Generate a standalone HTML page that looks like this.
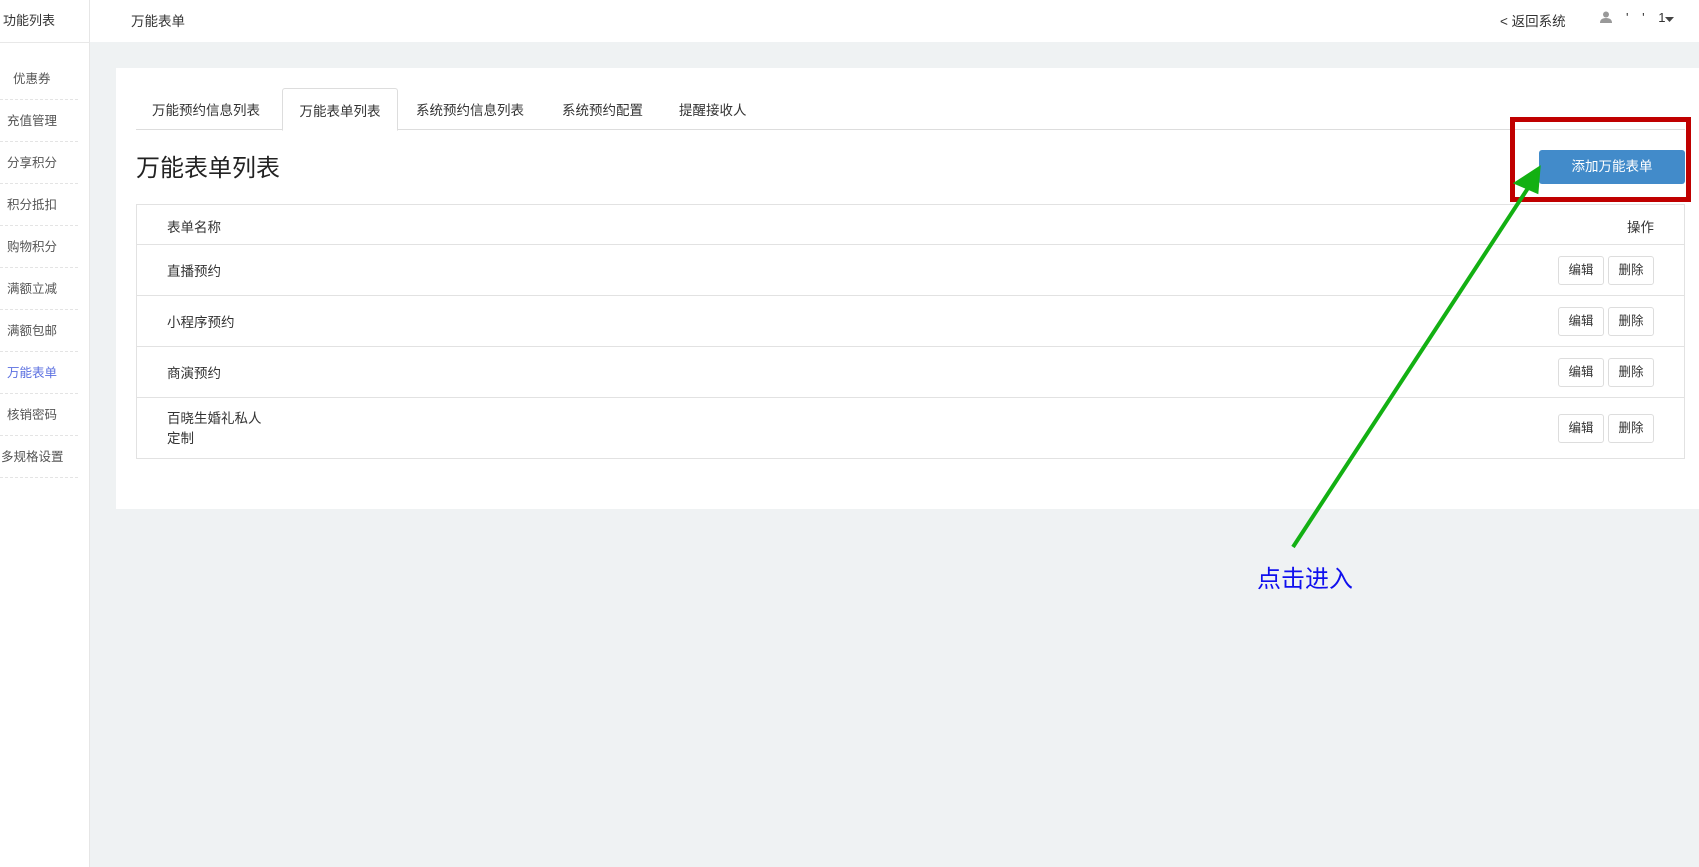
<!DOCTYPE html>
<html><head><meta charset="utf-8"><style>
*{margin:0;padding:0;box-sizing:border-box}
body{width:1699px;height:867px;background:#eff2f3;font-family:"Liberation Sans","Noto Sans CJK SC",sans-serif;color:#333;position:relative;overflow:hidden;font-size:13px}
.abs{position:absolute}
#side{left:0;top:0;width:90px;height:867px;background:#fff;border-right:1px solid #e6e6e6}
#hdr{left:90px;top:0;width:1609px;height:42px;background:#fff}
.si{position:absolute;left:0;width:78px;height:42px;line-height:42px;font-size:12.5px;color:#555;border-bottom:1px dashed #e4e4e4;padding-left:7px}
#panel{left:116px;top:68px;width:1583px;height:441px;background:#fff}
.tab{position:absolute;top:88px;height:42px;line-height:45px;font-size:13.5px;color:#333}
.row{position:absolute;left:136px;width:1549px;border-left:1px solid #e2e2e2;border-right:1px solid #e2e2e2;border-bottom:1px solid #e2e2e2;font-size:13.5px}
.row span.t{position:absolute;left:30px}
.b{position:absolute;width:46px;height:29px;border:1px solid #ddd;border-radius:3px;background:#fff;font-size:12.5px;text-align:center;line-height:27px;color:#333}
</style></head><body>
<div id="side" class="abs">
<div class="abs" style="left:3px;top:10px;font-size:13px;color:#333">功能列表</div>
<div class="abs" style="left:0;top:42px;width:90px;border-top:1px solid #e8e8e8"></div>
<div class="si" style="top:58px;padding-left:13px">优惠券</div>
<div class="si" style="top:100px">充值管理</div>
<div class="si" style="top:142px">分享积分</div>
<div class="si" style="top:184px">积分抵扣</div>
<div class="si" style="top:226px">购物积分</div>
<div class="si" style="top:268px">满额立减</div>
<div class="si" style="top:310px">满额包邮</div>
<div class="si" style="top:352px;color:#5b6fe0">万能表单</div>
<div class="si" style="top:394px">核销密码</div>
<div class="si" style="top:436px;padding-left:1px">多规格设置</div>
</div>
<div id="hdr" class="abs">
<div class="abs" style="left:41px;top:10px;font-size:13.5px">万能表单</div>
<div class="abs" style="left:1410px;top:10px;font-size:13.5px">&lt; 返回系统</div>
<svg class="abs" style="left:1510px;top:11px" width="12" height="12" viewBox="0 0 12 12"><circle cx="6" cy="3.5" r="3" fill="#999"/><path d="M0 12 Q0 7 6 7 Q12 7 12 12Z" fill="#999"/></svg>
<div class="abs" style="left:1536px;top:10px;font-size:13px;letter-spacing:5px">' ' 1</div>
<svg class="abs" style="left:1575px;top:17px" width="9" height="5"><path d="M0 0H9L4.5 5Z" fill="#444"/></svg>
</div>
<div id="panel" class="abs"></div>
<div class="abs" style="left:136px;top:129px;width:1549px;border-top:1px solid #ddd"></div>
<div class="tab" style="left:152px">万能预约信息列表</div>
<div class="tab" style="left:282px;width:116px;border:1px solid #ddd;border-bottom:1px solid #fff;background:#fff;border-radius:3px 3px 0 0;text-align:center;height:43px">万能表单列表</div>
<div class="tab" style="left:416px">系统预约信息列表</div>
<div class="tab" style="left:562px">系统预约配置</div>
<div class="tab" style="left:679px">提醒接收人</div>
<div class="abs" style="left:136px;top:148px;font-size:24px;color:#222">万能表单列表</div>
<div class="abs" style="left:1539px;top:150px;width:146px;height:34px;background:#428bca;border-radius:3px;color:#fff;font-size:13.5px;text-align:center;line-height:34px">添加万能表单</div>
<div class="abs" style="left:1510px;top:117px;width:181px;height:85px;border:5px solid #c00000"></div>
<div class="row" style="top:204px;height:41px;border-top:1px solid #e2e2e2"><span class="t" style="top:11px">表单名称</span><span style="position:absolute;right:30px;top:11px">操作</span></div>
<div class="row" style="top:245px;height:51px"><span class="t" style="top:15px">直播预约</span></div>
<div class="row" style="top:296px;height:51px"><span class="t" style="top:15px">小程序预约</span></div>
<div class="row" style="top:347px;height:51px"><span class="t" style="top:15px">商演预约</span></div>
<div class="row" style="top:398px;height:61px"><span class="t" style="top:11px;line-height:20px">百晓生婚礼私人<br>定制</span></div>
<div class="b" style="left:1558px;top:256px">编辑</div><div class="b" style="left:1608px;top:256px">删除</div>
<div class="b" style="left:1558px;top:307px">编辑</div><div class="b" style="left:1608px;top:307px">删除</div>
<div class="b" style="left:1558px;top:358px">编辑</div><div class="b" style="left:1608px;top:358px">删除</div>
<div class="b" style="left:1558px;top:414px">编辑</div><div class="b" style="left:1608px;top:414px">删除</div>
<svg class="abs" style="left:0;top:0" width="1699" height="867"><line x1="1293" y1="547" x2="1530" y2="185" stroke="#13b013" stroke-width="4"/><path d="M1539 168 L1516 183 L1537 192Z" fill="#13b013" stroke="#13b013" stroke-width="3"/></svg>
<div class="abs" style="left:1257px;top:559px;font-size:24px;color:#1010ee">点击进入</div>
</body></html>
